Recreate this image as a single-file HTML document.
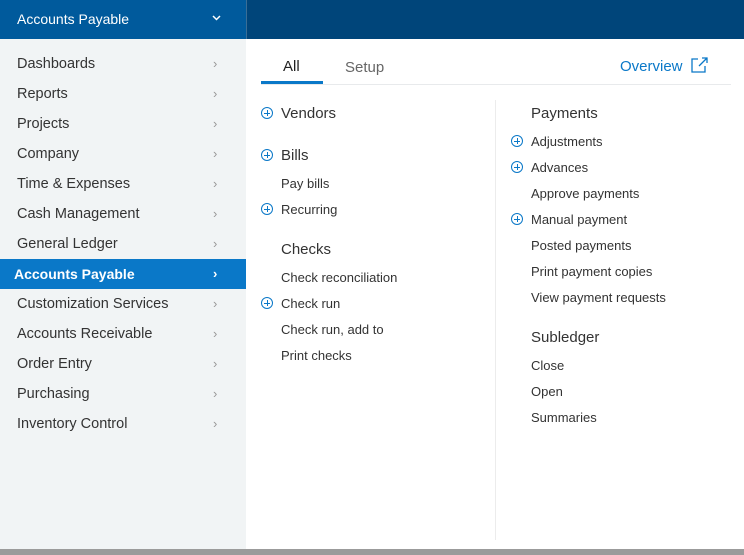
<!DOCTYPE html><html><head><style>
*{margin:0;padding:0;box-sizing:border-box}
body{width:744px;height:555px;overflow:hidden;background:#fff;font-family:"Liberation Sans",sans-serif;position:relative}
.hl{position:absolute;left:0;top:0;width:246px;height:39px;background:#005a9c;color:#fff;font-size:14px}
.hr{position:absolute;left:246px;top:0;right:0;height:39px;background:#00457a;border-left:1px solid #3a6e96}
.side{position:absolute;left:0;top:39px;width:246px;height:510px;background:#f1f4f5}
.row{position:absolute;left:0;width:246px;height:30px;line-height:30px;font-size:14.5px;color:#333;padding-left:17px}
.row span{position:absolute;left:213px;color:#999;font-size:13px}
.row.act{background:#0a78c8;color:#fff;font-weight:bold;padding-left:14px;font-size:14px}
.row.act span{color:#fff}
.t{position:absolute;white-space:nowrap;color:#333}
.h{font-size:15px;color:#333}
.i{font-size:13px;color:#333}
.p{position:absolute;width:12px;height:12px;border:1.3px solid #0a78c8;border-radius:50%}
.p:before{content:"";position:absolute;left:2px;top:4.5px;width:6px;height:1.3px;background:#0a78c8}
.p:after{content:"";position:absolute;left:4.5px;top:2px;width:1.3px;height:6px;background:#0a78c8}
.shadow{position:absolute;left:0;top:549px;width:744px;height:6px;background:#9b9b9b}
</style></head><body>
<div class="hl"><div class="t" style="left:17px;top:11px;color:#fff">Accounts Payable</div>
<svg style="position:absolute;left:212px;top:15px" width="9" height="6"><path d="M1 1l3.5 3.5L8 1" stroke="#fff" stroke-width="1.5" fill="none"/></svg></div>
<div class="hr"></div>
<div class="side">
<div class="row" style="top:10px">Dashboards<span>›</span></div>
<div class="row" style="top:40px">Reports<span>›</span></div>
<div class="row" style="top:70px">Projects<span>›</span></div>
<div class="row" style="top:100px">Company<span>›</span></div>
<div class="row" style="top:130px">Time &amp; Expenses<span>›</span></div>
<div class="row" style="top:160px">Cash Management<span>›</span></div>
<div class="row" style="top:190px">General Ledger<span>›</span></div>
<div class="row act" style="top:220px">Accounts Payable<span>›</span></div>
<div class="row" style="top:250px">Customization Services<span>›</span></div>
<div class="row" style="top:280px">Accounts Receivable<span>›</span></div>
<div class="row" style="top:310px">Order Entry<span>›</span></div>
<div class="row" style="top:340px">Purchasing<span>›</span></div>
<div class="row" style="top:370px">Inventory Control<span>›</span></div>
</div>
<div class="t" style="left:283px;top:58px;font-size:15px;color:#222">All</div>
<div style="position:absolute;left:261px;top:81px;width:62px;height:3px;background:#0a78c8"></div>
<div class="t" style="left:345px;top:59px;font-size:15px;color:#666">Setup</div>
<div class="t" style="left:620px;top:58px;font-size:15px;color:#0a78c8">Overview</div>
<svg style="position:absolute;left:690px;top:56px" width="20" height="18"><path d="M8 3H2v13h13v-6" stroke="#0a78c8" stroke-width="1.3" fill="none"/><path d="M9 10L17 2M12 2h5v5" stroke="#0a78c8" stroke-width="1.3" fill="none"/></svg>
<div style="position:absolute;left:261px;top:84px;width:470px;height:1px;background:#e8eaec"></div>
<div style="position:absolute;left:495px;top:100px;width:1px;height:440px;background:#ececec"></div>

<div class="p" style="left:261px;top:107px"></div><div class="t h" style="left:281px;top:105px">Vendors</div>
<div class="p" style="left:261px;top:149px"></div><div class="t h" style="left:281px;top:147px">Bills</div>
<div class="t i" style="left:281px;top:176px">Pay bills</div>
<div class="p" style="left:261px;top:203px"></div><div class="t i" style="left:281px;top:202px">Recurring</div>
<div class="t h" style="left:281px;top:241px">Checks</div>
<div class="t i" style="left:281px;top:270px">Check reconciliation</div>
<div class="p" style="left:261px;top:297px"></div><div class="t i" style="left:281px;top:296px">Check run</div>
<div class="t i" style="left:281px;top:322px">Check run, add to</div>
<div class="t i" style="left:281px;top:348px">Print checks</div>

<div class="t h" style="left:531px;top:105px">Payments</div>
<div class="p" style="left:511px;top:135px"></div><div class="t i" style="left:531px;top:134px">Adjustments</div>
<div class="p" style="left:511px;top:161px"></div><div class="t i" style="left:531px;top:160px">Advances</div>
<div class="t i" style="left:531px;top:186px">Approve payments</div>
<div class="p" style="left:511px;top:213px"></div><div class="t i" style="left:531px;top:212px">Manual payment</div>
<div class="t i" style="left:531px;top:238px">Posted payments</div>
<div class="t i" style="left:531px;top:264px">Print payment copies</div>
<div class="t i" style="left:531px;top:290px">View payment requests</div>
<div class="t h" style="left:531px;top:329px">Subledger</div>
<div class="t i" style="left:531px;top:358px">Close</div>
<div class="t i" style="left:531px;top:384px">Open</div>
<div class="t i" style="left:531px;top:410px">Summaries</div>
<div class="shadow"></div>
</body></html>
